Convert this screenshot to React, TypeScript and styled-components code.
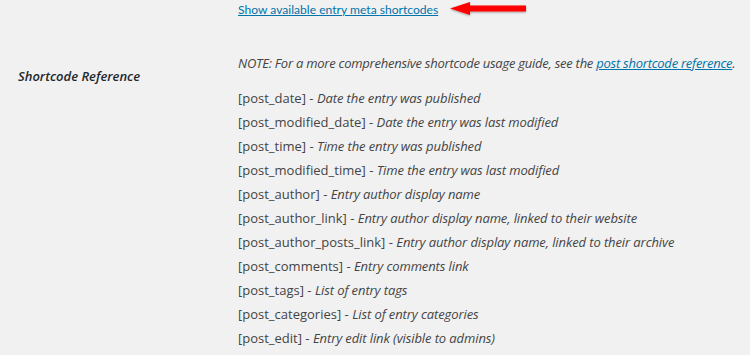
import styled, { createGlobalStyle } from "styled-components";

const GlobalStyle = createGlobalStyle`
  html, body {
    margin: 0;
    padding: 0;
    background: #f1f1f1;
  }
  body {
    font-family: "Open Sans", "Noto Sans", sans-serif;
    font-size: 13px;
    color: #444;
  }
`;

const shortcodes: [string, string][] = [
  ["post_date", "Date the entry was published"],
  ["post_modified_date", "Date the entry was last modified"],
  ["post_time", "Time the entry was published"],
  ["post_modified_time", "Time the entry was last modified"],
  ["post_author", "Entry author display name"],
  ["post_author_link", "Entry author display name, linked to their website"],
  ["post_author_posts_link", "Entry author display name, linked to their archive"],
  ["post_comments", "Entry comments link"],
  ["post_tags", "List of entry tags"],
  ["post_categories", "List of entry categories"],
  ["post_edit", "Entry edit link (visible to admins)"],
];

const Page = styled.div`
  width: 750px;
  height: 355px;
  overflow: hidden;
`;

const TopRow = styled.div`
  display: flex;
  align-items: center;
  padding-left: 238px;
  height: 18px;
`;

const Link = styled.a<{ $toggle?: boolean }>`
  color: #0073aa;
  text-decoration: underline;
  cursor: pointer;
  ${(p) => p.$toggle && `font-family: Lato, "Open Sans", sans-serif; font-size: 12.1px;`}
`;

const Arrow = styled.svg`
  margin-left: 11px;
  flex: none;
`;

const FormRow = styled.div`
  display: grid;
  grid-template-columns: 238px 1fr;
  margin-top: 33px;
`;

const Label = styled.div`
  padding: 13px 0 0 18px;
  line-height: 24px;
  font-style: italic;
  font-weight: 600;
  color: #23282d;
`;

const Cell = styled.div`
  display: flex;
  flex-direction: column;
`;

const Note = styled.p`
  margin: 0 0 11px;
  line-height: 24px;
  font-style: italic;
  letter-spacing: -0.25px;
  white-space: nowrap;
`;

const Line = styled.div`
  line-height: 24px;
  height: 24px;
  white-space: nowrap;
`;

const Desc = styled.em`
  font-style: italic;
  letter-spacing: -0.1px;
`;

export default function App() {
  return (
    <Page>
      <GlobalStyle />
      <TopRow>
        <Link $toggle>Show available entry meta shortcodes</Link>
        <Arrow width="80" height="18" viewBox="0 0 80 18">
          <defs>
            <filter id="sh" x="-20%" y="-50%" width="140%" height="200%">
              <feGaussianBlur in="SourceAlpha" stdDeviation="1.2" />
              <feOffset dx="0" dy="1" />
              <feComponentTransfer>
                <feFuncA type="linear" slope="0.35" />
              </feComponentTransfer>
              <feMerge>
                <feMergeNode />
                <feMergeNode in="SourceGraphic" />
              </feMerge>
            </filter>
          </defs>
          <path
            d="M1 8.5 L21 2 L21 5.5 L77 5.5 L77 11.5 L21 11.5 L21 15 Z"
            fill="#f00"
            filter="url(#sh)"
          />
        </Arrow>
      </TopRow>
      <FormRow>
        <Label>Shortcode Reference</Label>
        <Cell>
          <Note>
            NOTE: For a more comprehensive shortcode usage guide, see the{" "}
            <Link>post shortcode reference</Link>.
          </Note>
          {shortcodes.map(([code, desc]) => (
            <Line key={code}>
              [{code}] - <Desc>{desc}</Desc>
            </Line>
          ))}
        </Cell>
      </FormRow>
    </Page>
  );
}
